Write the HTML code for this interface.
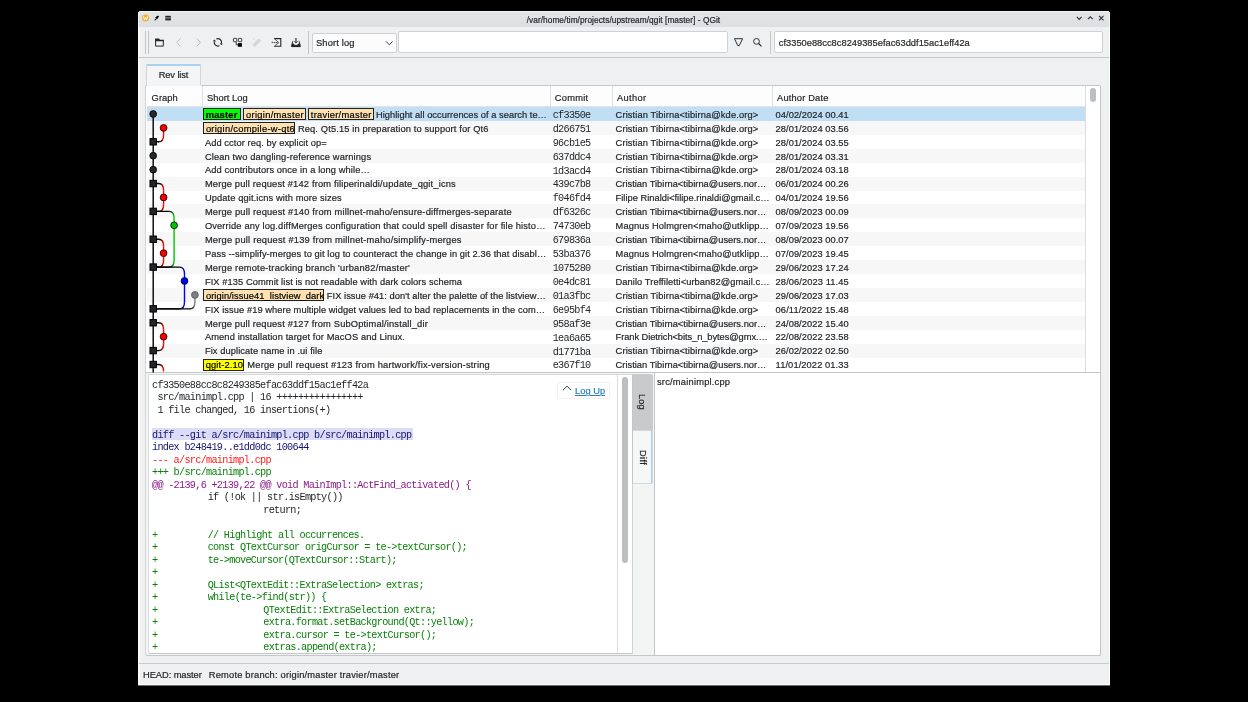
<!DOCTYPE html>
<html><head><meta charset="utf-8"><style>
html,body{margin:0;padding:0;background:#000;width:1248px;height:702px;overflow:hidden;position:relative}
.t{position:absolute;white-space:pre;font-family:"Liberation Sans",sans-serif;-webkit-text-stroke:0.2px currentColor}
.m{position:absolute;white-space:pre;font-family:"Liberation Mono",monospace}
</style></head><body>
<div style="position:absolute;left:138.00px;top:11.00px;width:971.70px;height:674.00px;background:#eff0f1;border-radius:4px 4px 0 0;box-shadow:inset 2px 0 0 #fafafb,inset -1px 0 0 #fafafb, inset 0 -1px 0 #fbfbfb, 0 1px 0 #6a6a6a"></div><div style="position:absolute;left:138.00px;top:11.00px;width:971.70px;height:16.00px;background:linear-gradient(#e3e4e6,#dddfe1);border-radius:4px 4px 0 0;box-shadow:inset 0 1px 0 #f2f3f4,inset 1px 0 0 #f2f3f4,inset -1px 0 0 #f2f3f4"></div><div style="position:absolute;left:139.00px;top:56.60px;width:969.70px;height:1.00px;background:#c6c8cb"></div><div style="position:absolute;left:145.00px;top:31.20px;width:0.90px;height:23.00px;background:#c4c6c8"></div><div style="position:absolute;left:147.90px;top:31.20px;width:0.90px;height:23.00px;background:#c4c6c8"></div><div style="position:absolute;left:308.20px;top:31.00px;width:0.90px;height:23.00px;background:#c4c6c8"></div><div style="position:absolute;left:770.10px;top:31.00px;width:0.90px;height:23.00px;background:#c4c6c8"></div><div style="position:absolute;left:312.20px;top:32.50px;width:84.60px;height:20.00px;background:#fcfcfc;border:1px solid #cfd1d3;border-radius:2px;box-sizing:border-box"></div><div style="position:absolute;left:397.80px;top:31.40px;width:330.60px;height:22.00px;background:#fff;border:1px solid #cfd1d3;border-radius:2px;box-sizing:border-box"></div><div style="position:absolute;left:773.60px;top:31.40px;width:329.20px;height:22.00px;background:#fff;border:1px solid #cfd1d3;border-radius:2px;box-sizing:border-box"></div><div style="position:absolute;left:145.90px;top:64.00px;width:55.20px;height:22.00px;background:#f4f5f6;border:1px solid #d3d5d7;border-bottom:none;border-radius:2px 2px 0 0;box-sizing:border-box"></div><div style="position:absolute;left:146.20px;top:64.00px;width:54.60px;height:1.80px;background:#a9d2f1;border-radius:2px 2px 0 0"></div><div style="position:absolute;left:145.40px;top:85.00px;width:955.90px;height:288.00px;background:#fff;border:1px solid #c4c6c8;border-left:1.8px solid #d2d4d6;box-sizing:border-box;border-radius:2px 2px 0 0"></div><div style="position:absolute;left:147.20px;top:86.00px;width:938.10px;height:20.50px;background:#fdfdfd"></div><div style="position:absolute;left:201.60px;top:86.00px;width:1.00px;height:20.50px;background:#dfe0e2"></div><div style="position:absolute;left:550.10px;top:86.00px;width:1.00px;height:20.50px;background:#dfe0e2"></div><div style="position:absolute;left:612.10px;top:86.00px;width:1.00px;height:20.50px;background:#dfe0e2"></div><div style="position:absolute;left:771.90px;top:86.00px;width:1.00px;height:20.50px;background:#dfe0e2"></div><div style="position:absolute;left:147.20px;top:106.00px;width:938.10px;height:1.00px;background:#e2e3e5"></div><div style="position:absolute;left:146.90px;top:84.60px;width:53.80px;height:1.60px;background:#f2f3f4"></div><div style="position:absolute;left:1085.30px;top:86.00px;width:1.00px;height:287.00px;background:#dcdddf"></div><div style="position:absolute;left:1090.00px;top:88.40px;width:6.00px;height:13.50px;background:#bcbec0;border-radius:3px"></div><div style="position:absolute;left:147.20px;top:107.00px;width:938.10px;height:13.92px;background:#c1dff4"></div><div style="position:absolute;left:202.80px;top:108.10px;width:38.60px;height:12.00px;background:#00ff00;border:1px solid #202020;box-sizing:border-box"></div><div style="position:absolute;left:243.20px;top:108.10px;width:62.50px;height:12.00px;background:#ffe2b2;border:1px solid #202020;box-sizing:border-box"></div><div style="position:absolute;left:307.90px;top:108.10px;width:66.00px;height:12.00px;background:#ffe2b2;border:1px solid #202020;box-sizing:border-box"></div><div style="position:absolute;left:147.20px;top:120.92px;width:938.10px;height:13.92px;background:#f7f7f7"></div><div style="position:absolute;left:203.00px;top:122.02px;width:91.80px;height:12.00px;background:#ffe2b2;border:1px solid #202020;box-sizing:border-box"></div><div style="position:absolute;left:147.20px;top:148.76px;width:938.10px;height:13.92px;background:#f7f7f7"></div><div style="position:absolute;left:147.20px;top:176.60px;width:938.10px;height:13.92px;background:#f7f7f7"></div><div style="position:absolute;left:147.20px;top:204.44px;width:938.10px;height:13.92px;background:#f7f7f7"></div><div style="position:absolute;left:147.20px;top:232.28px;width:938.10px;height:13.92px;background:#f7f7f7"></div><div style="position:absolute;left:147.20px;top:260.12px;width:938.10px;height:13.92px;background:#f7f7f7"></div><div style="position:absolute;left:147.20px;top:287.96px;width:938.10px;height:13.92px;background:#f7f7f7"></div><div style="position:absolute;left:203.00px;top:289.06px;width:121.00px;height:12.00px;background:#ffe2b2;border:1px solid #202020;box-sizing:border-box"></div><div style="position:absolute;left:147.20px;top:315.80px;width:938.10px;height:13.92px;background:#f7f7f7"></div><div style="position:absolute;left:147.20px;top:343.64px;width:938.10px;height:13.92px;background:#f7f7f7"></div><div style="position:absolute;left:202.80px;top:358.66px;width:41.30px;height:12.00px;background:#ffff00;border:1px solid #202020;box-sizing:border-box"></div><div style="position:absolute;left:145.20px;top:373.00px;width:956.10px;height:282.90px;background:#f3f4f4;border:1px solid #c4c6c8;border-left:1.8px solid #d3d5d7;border-top:none;box-sizing:border-box;border-radius:0 0 2.5px 2.5px"></div><div style="position:absolute;left:147.60px;top:373.60px;width:485.20px;height:280.20px;background:#fff;border:1px solid #c4c6c8;border-left:1.4px solid #dcdedf;border-top-color:#d6d8da;box-sizing:border-box;border-radius:0 0 2px 0"></div><div style="position:absolute;left:617.40px;top:374.20px;width:1.00px;height:278.80px;background:#dcdddf"></div><div style="position:absolute;left:622.00px;top:377.10px;width:5.60px;height:186.00px;background:#bcbec0;border-radius:3px"></div><div style="position:absolute;left:557.30px;top:382.30px;width:52.30px;height:16.40px;border:1px solid #f0f0f1;box-sizing:border-box;border-radius:2px"></div><div style="position:absolute;left:632.80px;top:374.00px;width:19.90px;height:55.60px;background:#c9cacc;border-radius:0 3px 0 0"></div><div style="position:absolute;left:632.80px;top:429.60px;width:19.90px;height:54.80px;background:#f6f7f7;border:1px solid #d6d8da;border-left:none;box-sizing:border-box;border-radius:0 0 2px 0"></div><div style="position:absolute;left:650.60px;top:430.20px;width:1.90px;height:53.80px;background:#a6d1f2"></div><div style="position:absolute;left:632.30px;top:484.40px;width:1.00px;height:169.40px;background:#d0d2d4"></div><div style="position:absolute;left:146.20px;top:372.00px;width:955.10px;height:1.00px;background:#c4c6c8"></div><div style="position:absolute;left:654.30px;top:373.00px;width:447.00px;height:282.90px;background:#fff;border:1px solid #c4c6c8;border-top:none;box-sizing:border-box;border-radius:0 0 2.5px 0"></div><div style="position:absolute;left:139.00px;top:662.80px;width:969.70px;height:1.00px;background:#c9cbcd"></div><div style="position:absolute;left:152.00px;top:428.20px;width:260.68px;height:11.60px;background:#dcdcf6"></div>
<svg style="position:absolute;left:0;top:0" width="1248" height="702"><circle cx="145.6" cy="18" r="3.6" fill="#f8b133"/><path d="M143.5 16.4 L144.5 19.9 L145.6 17.7 L146.7 19.9 L147.7 16.4" fill="none" stroke="#fff" stroke-width="0.9"/><path d="M154.6 20.4 L156.4 18.6" stroke="#232629" stroke-width="1.1"/><path d="M155.2 17.6 L157.9 15.4 L159.1 16.6 L157 19.3 Z" fill="#000"/><rect x="165.3" y="15.8" width="5.6" height="4.6" fill="#232629"/><rect x="165.3" y="17.6" width="5.6" height="0.7" fill="#dee0e2"/><path d="M1076.8 16.9 L1079.2 19.3 L1081.6 16.9" fill="none" stroke="#31363b" stroke-width="1.2"/><path d="M1087.9 19.2 L1090.3 16.8 L1092.7 19.2" fill="none" stroke="#31363b" stroke-width="1.2"/><path d="M1099 15.8 L1103.5 20.3 M1103.5 15.8 L1099 20.3" fill="none" stroke="#31363b" stroke-width="1.2"/><path d="M155.6 40.5 V46.1 H163.3 V40.5 Z" fill="none" stroke="#232629" stroke-width="1"/><path d="M155.1 38.6 H159 L160 39.8 H163.8 V41.3 H155.1 Z" fill="#232629"/><path d="M180.6 38.4 L176.8 42.4 L180.6 46.4" fill="none" stroke="#b4b6b8" stroke-width="0.9"/><path d="M196.6 38.4 L200.4 42.4 L196.6 46.4" fill="none" stroke="#b4b6b8" stroke-width="0.9"/><path d="M216.34 39.00 A3.7 3.7 0 0 1 221.47 43.31 M219.46 45.70 A3.7 3.7 0 0 1 214.33 41.39" fill="none" stroke="#232629" stroke-width="1.1"/><path d="M220.96 45.24 L222.92 43.70 L220.03 42.92Z M214.84 39.46 L212.88 41.00 L215.77 41.78Z" fill="#232629"/><rect x="233.4" y="38.4" width="3.4" height="3.3" rx="0.4" fill="none" stroke="#232629" stroke-width="0.85"/><rect x="238.3" y="38.4" width="3.4" height="3.3" rx="0.4" fill="none" stroke="#232629" stroke-width="0.85"/><path d="M236.2 42 V44.8 H238" fill="none" stroke="#232629" stroke-width="0.9"/><rect x="237.9" y="43.1" width="4" height="3.7" fill="#000"/><path d="M253.2 44.6 L258.9 38.9 L260.6 40.6 L254.9 46.3 Z" fill="none" stroke="#c6c7c9" stroke-width="0.9"/><path d="M254 45.5 L259.8 39.7" stroke="#d0d1d3" stroke-width="1.2"/><circle cx="253.7" cy="39" r="0.5" fill="#c8c9cb"/><path d="M274.2 38.6 H280.8 V46.3 H274.2" fill="none" stroke="#232629" stroke-width="1.1"/><path d="M274.6 38.9 L278.8 42.5 L274.6 46.1" fill="none" stroke="#232629" stroke-width="0.7"/><path d="M271.6 42.3 H273 M273.6 42.6 H275 M275.6 42.6 H277.6" stroke="#232629" stroke-width="0.9"/><path d="M292.9 40.9 L291.7 46.6 H300.2 L299 40.9" fill="#fff" stroke="#232629" stroke-width="0.9"/><path d="M291.7 43.5 H293.6 A2.35 1.5 0 0 0 298.3 43.5 H300.2 L300.6 46.9 H291.3Z" fill="#232629"/><path d="M295.95 37.9 V43" stroke="#232629" stroke-width="1.1"/><path d="M294.3 41.4 L295.95 43.2 L297.6 41.4" fill="none" stroke="#232629" stroke-width="0.9"/><path d="M386 41.4 L389.3 44.7 L392.6 41.4" fill="none" stroke="#232629" stroke-width="0.9"/><path d="M734.5 38.7 L742.6 38.7 L739.2 45.7 L737.8 45.7 Z" fill="none" stroke="#232629" stroke-width="0.95" stroke-linejoin="round"/><circle cx="756.5" cy="41.4" r="2.9" fill="none" stroke="#232629" stroke-width="0.95"/><path d="M758.6 43.5 L761.5 46.4" stroke="#232629" stroke-width="1.1"/><path d="M562.9 390.2 L567 386.1 L571.1 390.2" fill="none" stroke="#232629" stroke-width="0.9"/><defs><clipPath id="gc"><rect x="147" y="107" width="55" height="265.4"/></clipPath></defs><g clip-path="url(#gc)"><line x1="153.2" y1="113.96" x2="153.2" y2="373" stroke="#000" stroke-width="1.4"/><line x1="163.6" y1="127.88" x2="163.6" y2="134.84" stroke="#ff0000" stroke-width="1.4"/><linearGradient id="g1" gradientUnits="userSpaceOnUse" x1="158.80" y1="141.80" x2="163.60" y2="137.30"><stop offset="0" stop-color="#111"/><stop offset="1" stop-color="#ff0000"/></linearGradient><path d="M163.60 134.80 Q163.60 141.80 158.80 141.80" fill="none" stroke="url(#g1)" stroke-width="1.4"/><path d="M159.00 141.80 H156.2" fill="none" stroke="#000" stroke-width="1.4"/><path d="M156.2 183.56 H159.00" fill="none" stroke="#000" stroke-width="1.4"/><linearGradient id="g2" gradientUnits="userSpaceOnUse" x1="158.80" y1="183.56" x2="163.60" y2="188.06"><stop offset="0" stop-color="#111"/><stop offset="1" stop-color="#ff0000"/></linearGradient><path d="M158.80 183.56 Q163.60 183.56 163.60 190.56" fill="none" stroke="url(#g2)" stroke-width="1.4"/><line x1="163.6" y1="190.52" x2="163.6" y2="204.44" stroke="#ff0000" stroke-width="1.4"/><linearGradient id="g3" gradientUnits="userSpaceOnUse" x1="158.80" y1="211.40" x2="163.60" y2="206.90"><stop offset="0" stop-color="#111"/><stop offset="1" stop-color="#ff0000"/></linearGradient><path d="M163.60 204.40 Q163.60 211.40 158.80 211.40" fill="none" stroke="url(#g3)" stroke-width="1.4"/><path d="M159.00 211.40 H156.2" fill="none" stroke="#000" stroke-width="1.4"/><path d="M156.2 211.40 H169.50" fill="none" stroke="#000" stroke-width="1.4"/><linearGradient id="g4" gradientUnits="userSpaceOnUse" x1="169.30" y1="211.40" x2="174.10" y2="215.90"><stop offset="0" stop-color="#111"/><stop offset="1" stop-color="#00c800"/></linearGradient><path d="M169.30 211.40 Q174.10 211.40 174.10 218.40" fill="none" stroke="url(#g4)" stroke-width="1.4"/><line x1="174.1" y1="218.36" x2="174.1" y2="260.12" stroke="#00c800" stroke-width="1.4"/><linearGradient id="g5" gradientUnits="userSpaceOnUse" x1="169.30" y1="267.08" x2="174.10" y2="262.58"><stop offset="0" stop-color="#111"/><stop offset="1" stop-color="#00c800"/></linearGradient><path d="M174.10 260.08 Q174.10 267.08 169.30 267.08" fill="none" stroke="url(#g5)" stroke-width="1.4"/><path d="M169.50 267.08 H156.2" fill="none" stroke="#000" stroke-width="1.4"/><path d="M156.2 239.24 H159.00" fill="none" stroke="#000" stroke-width="1.4"/><linearGradient id="g6" gradientUnits="userSpaceOnUse" x1="158.80" y1="239.24" x2="163.60" y2="243.74"><stop offset="0" stop-color="#111"/><stop offset="1" stop-color="#ff0000"/></linearGradient><path d="M158.80 239.24 Q163.60 239.24 163.60 246.24" fill="none" stroke="url(#g6)" stroke-width="1.4"/><line x1="163.6" y1="246.20" x2="163.6" y2="260.12" stroke="#ff0000" stroke-width="1.4"/><linearGradient id="g7" gradientUnits="userSpaceOnUse" x1="158.80" y1="267.08" x2="163.60" y2="262.58"><stop offset="0" stop-color="#111"/><stop offset="1" stop-color="#ff0000"/></linearGradient><path d="M163.60 260.08 Q163.60 267.08 158.80 267.08" fill="none" stroke="url(#g7)" stroke-width="1.4"/><path d="M159.00 267.08 H156.2" fill="none" stroke="#000" stroke-width="1.4"/><path d="M156.2 267.08 H179.90" fill="none" stroke="#000" stroke-width="1.4"/><linearGradient id="g8" gradientUnits="userSpaceOnUse" x1="179.70" y1="267.08" x2="184.50" y2="271.58"><stop offset="0" stop-color="#111"/><stop offset="1" stop-color="#0000ff"/></linearGradient><path d="M179.70 267.08 Q184.50 267.08 184.50 274.08" fill="none" stroke="url(#g8)" stroke-width="1.4"/><line x1="184.5" y1="274.04" x2="184.5" y2="301.88" stroke="#0000ff" stroke-width="1.4"/><linearGradient id="g9" gradientUnits="userSpaceOnUse" x1="179.70" y1="308.84" x2="184.50" y2="304.34"><stop offset="0" stop-color="#111"/><stop offset="1" stop-color="#0000ff"/></linearGradient><path d="M184.50 301.84 Q184.50 308.84 179.70 308.84" fill="none" stroke="url(#g9)" stroke-width="1.4"/><path d="M179.90 308.84 H156.2" fill="none" stroke="#000" stroke-width="1.4"/><line x1="194.9" y1="294.92" x2="194.9" y2="301.88" stroke="#808080" stroke-width="1.4"/><linearGradient id="g10" gradientUnits="userSpaceOnUse" x1="190.10" y1="308.84" x2="194.90" y2="304.34"><stop offset="0" stop-color="#111"/><stop offset="1" stop-color="#808080"/></linearGradient><path d="M194.90 301.84 Q194.90 308.84 190.10 308.84" fill="none" stroke="url(#g10)" stroke-width="1.4"/><path d="M190.30 308.84 H156.2" fill="none" stroke="#000" stroke-width="1.4"/><path d="M156.2 322.76 H159.00" fill="none" stroke="#000" stroke-width="1.4"/><linearGradient id="g11" gradientUnits="userSpaceOnUse" x1="158.80" y1="322.76" x2="163.60" y2="327.26"><stop offset="0" stop-color="#111"/><stop offset="1" stop-color="#ff0000"/></linearGradient><path d="M158.80 322.76 Q163.60 322.76 163.60 329.76" fill="none" stroke="url(#g11)" stroke-width="1.4"/><line x1="163.6" y1="329.72" x2="163.6" y2="343.64" stroke="#ff0000" stroke-width="1.4"/><linearGradient id="g12" gradientUnits="userSpaceOnUse" x1="158.80" y1="350.60" x2="163.60" y2="346.10"><stop offset="0" stop-color="#111"/><stop offset="1" stop-color="#ff0000"/></linearGradient><path d="M163.60 343.60 Q163.60 350.60 158.80 350.60" fill="none" stroke="url(#g12)" stroke-width="1.4"/><path d="M159.00 350.60 H156.2" fill="none" stroke="#000" stroke-width="1.4"/><path d="M156.2 364.52 H159.00" fill="none" stroke="#000" stroke-width="1.4"/><linearGradient id="g13" gradientUnits="userSpaceOnUse" x1="158.80" y1="364.52" x2="163.60" y2="369.02"><stop offset="0" stop-color="#111"/><stop offset="1" stop-color="#ff0000"/></linearGradient><path d="M158.80 364.52 Q163.60 364.52 163.60 371.52" fill="none" stroke="url(#g13)" stroke-width="1.4"/><circle cx="153.2" cy="113.96" r="3.4" fill="#25282b" stroke="#000" stroke-width="0.8"/><circle cx="163.6" cy="127.88" r="3.4" fill="#ff0000" stroke="#000" stroke-width="0.8"/><rect x="150.0" y="138.60" width="6.4" height="6.4" fill="#232629" stroke="#000" stroke-width="1"/><circle cx="153.2" cy="155.72" r="3.4" fill="#25282b" stroke="#000" stroke-width="0.8"/><circle cx="153.2" cy="169.64" r="3.4" fill="#25282b" stroke="#000" stroke-width="0.8"/><rect x="150.0" y="180.36" width="6.4" height="6.4" fill="#232629" stroke="#000" stroke-width="1"/><circle cx="163.6" cy="197.48" r="3.4" fill="#ff0000" stroke="#000" stroke-width="0.8"/><rect x="150.0" y="208.20" width="6.4" height="6.4" fill="#232629" stroke="#000" stroke-width="1"/><circle cx="174.1" cy="225.32" r="3.4" fill="#00c800" stroke="#000" stroke-width="0.8"/><rect x="150.0" y="236.04" width="6.4" height="6.4" fill="#232629" stroke="#000" stroke-width="1"/><circle cx="163.6" cy="253.16" r="3.4" fill="#ff0000" stroke="#000" stroke-width="0.8"/><rect x="150.0" y="263.88" width="6.4" height="6.4" fill="#232629" stroke="#000" stroke-width="1"/><circle cx="184.5" cy="281.00" r="3.4" fill="#0000ff" stroke="#000" stroke-width="0.8"/><circle cx="194.9" cy="294.92" r="3.4" fill="#808080" stroke="#555" stroke-width="0.8"/><rect x="150.0" y="305.64" width="6.4" height="6.4" fill="#232629" stroke="#000" stroke-width="1"/><rect x="150.0" y="319.56" width="6.4" height="6.4" fill="#232629" stroke="#000" stroke-width="1"/><circle cx="163.6" cy="336.68" r="3.4" fill="#ff0000" stroke="#000" stroke-width="0.8"/><rect x="150.0" y="347.40" width="6.4" height="6.4" fill="#232629" stroke="#000" stroke-width="1"/><rect x="150.0" y="361.32" width="6.4" height="6.4" fill="#232629" stroke="#000" stroke-width="1"/></g></svg>
<div style="position:absolute;left:0;top:0;width:1248px;height:702px;will-change:transform"><div class="t" style="left:526.70px;top:15.99px;font-size:8.30px;line-height:9.27px;letter-spacing:0.050px;color:#232629;font-weight:normal;">/var/home/tim/projects/upstream/qgit [master] - QGit</div><div class="t" style="left:316.00px;top:38.47px;font-size:9.31px;line-height:10.41px;letter-spacing:0.149px;color:#232629;font-weight:normal;">Short log</div><div class="t" style="left:778.80px;top:37.67px;font-size:9.31px;line-height:10.41px;letter-spacing:0.009px;color:#232629;font-weight:normal;">cf3350e88cc8c8249385efac63ddf15ac1eff42a</div><div class="t" style="left:158.70px;top:70.47px;font-size:9.31px;line-height:10.41px;letter-spacing:-0.107px;color:#232629;font-weight:normal;">Rev list</div><div class="t" style="left:151.60px;top:92.57px;font-size:9.31px;line-height:10.41px;letter-spacing:0.081px;color:#232629;font-weight:normal;">Graph</div><div class="t" style="left:206.90px;top:92.57px;font-size:9.31px;line-height:10.41px;letter-spacing:0.069px;color:#232629;font-weight:normal;">Short Log</div><div class="t" style="left:554.80px;top:92.57px;font-size:9.31px;line-height:10.41px;letter-spacing:0.253px;color:#232629;font-weight:normal;">Commit</div><div class="t" style="left:617.10px;top:92.57px;font-size:9.31px;line-height:10.41px;letter-spacing:0.315px;color:#232629;font-weight:normal;">Author</div><div class="t" style="left:777.00px;top:92.57px;font-size:9.31px;line-height:10.41px;letter-spacing:0.178px;color:#232629;font-weight:normal;">Author Date</div><div class="t" style="left:615.60px;top:109.77px;font-size:9.31px;line-height:10.41px;letter-spacing:0.122px;color:#232629;font-weight:normal;">Cristian Tibirna&lt;tibirna@kde.org&gt;</div><div class="t" style="left:775.60px;top:109.77px;font-size:9.31px;line-height:10.41px;letter-spacing:0.053px;color:#232629;font-weight:normal;">04/02/2024 00.41</div><div class="t" style="left:205.70px;top:109.77px;font-size:9.31px;line-height:10.41px;letter-spacing:0.217px;color:#000;font-weight:bold;">master</div><div class="t" style="left:246.10px;top:109.77px;font-size:9.31px;line-height:10.41px;letter-spacing:0.305px;color:#000;font-weight:normal;">origin/master</div><div class="t" style="left:310.80px;top:109.77px;font-size:9.31px;line-height:10.41px;letter-spacing:0.284px;color:#000;font-weight:normal;">travier/master</div><div class="t" style="left:376.00px;top:109.77px;font-size:9.31px;line-height:10.41px;letter-spacing:0.035px;color:#232629;font-weight:normal;">Highlight all occurrences of a search te…</div><div class="t" style="left:615.60px;top:123.69px;font-size:9.31px;line-height:10.41px;letter-spacing:0.122px;color:#232629;font-weight:normal;">Cristian Tibirna&lt;tibirna@kde.org&gt;</div><div class="t" style="left:775.60px;top:123.69px;font-size:9.31px;line-height:10.41px;letter-spacing:0.053px;color:#232629;font-weight:normal;">28/01/2024 03.56</div><div class="t" style="left:205.90px;top:123.69px;font-size:9.31px;line-height:10.41px;letter-spacing:0.296px;color:#000;font-weight:normal;">origin/compile-w-qt6</div><div class="t" style="left:297.90px;top:123.69px;font-size:9.31px;line-height:10.41px;letter-spacing:0.137px;color:#232629;font-weight:normal;">Req. Qt5.15 in preparation to support for Qt6</div><div class="t" style="left:615.60px;top:137.61px;font-size:9.31px;line-height:10.41px;letter-spacing:0.122px;color:#232629;font-weight:normal;">Cristian Tibirna&lt;tibirna@kde.org&gt;</div><div class="t" style="left:775.60px;top:137.61px;font-size:9.31px;line-height:10.41px;letter-spacing:0.053px;color:#232629;font-weight:normal;">28/01/2024 03.55</div><div class="t" style="left:204.90px;top:137.61px;font-size:9.31px;line-height:10.41px;letter-spacing:0.077px;color:#232629;font-weight:normal;">Add cctor req. by explicit op=</div><div class="t" style="left:615.60px;top:151.53px;font-size:9.31px;line-height:10.41px;letter-spacing:0.122px;color:#232629;font-weight:normal;">Cristian Tibirna&lt;tibirna@kde.org&gt;</div><div class="t" style="left:775.60px;top:151.53px;font-size:9.31px;line-height:10.41px;letter-spacing:0.053px;color:#232629;font-weight:normal;">28/01/2024 03.31</div><div class="t" style="left:204.90px;top:151.53px;font-size:9.31px;line-height:10.41px;letter-spacing:0.136px;color:#232629;font-weight:normal;">Clean two dangling-reference warnings</div><div class="t" style="left:615.60px;top:165.45px;font-size:9.31px;line-height:10.41px;letter-spacing:0.122px;color:#232629;font-weight:normal;">Cristian Tibirna&lt;tibirna@kde.org&gt;</div><div class="t" style="left:775.60px;top:165.45px;font-size:9.31px;line-height:10.41px;letter-spacing:0.053px;color:#232629;font-weight:normal;">28/01/2024 03.18</div><div class="t" style="left:204.90px;top:165.45px;font-size:9.31px;line-height:10.41px;letter-spacing:0.098px;color:#232629;font-weight:normal;">Add contributors once in a long while…</div><div class="t" style="left:615.60px;top:179.37px;font-size:9.31px;line-height:10.41px;letter-spacing:0.017px;color:#232629;font-weight:normal;">Cristian Tibirna&lt;tibirna@users.nor…</div><div class="t" style="left:775.60px;top:179.37px;font-size:9.31px;line-height:10.41px;letter-spacing:0.053px;color:#232629;font-weight:normal;">06/01/2024 00.26</div><div class="t" style="left:204.90px;top:179.37px;font-size:9.31px;line-height:10.41px;letter-spacing:0.173px;color:#232629;font-weight:normal;">Merge pull request #142 from filiperinaldi/update_qgit_icns</div><div class="t" style="left:615.60px;top:193.29px;font-size:9.31px;line-height:10.41px;letter-spacing:0.016px;color:#232629;font-weight:normal;">Filipe Rinaldi&lt;filipe.rinaldi@gmail.c…</div><div class="t" style="left:775.60px;top:193.29px;font-size:9.31px;line-height:10.41px;letter-spacing:0.053px;color:#232629;font-weight:normal;">04/01/2024 19.56</div><div class="t" style="left:204.90px;top:193.29px;font-size:9.31px;line-height:10.41px;letter-spacing:0.112px;color:#232629;font-weight:normal;">Update qgit.icns with more sizes</div><div class="t" style="left:615.60px;top:207.21px;font-size:9.31px;line-height:10.41px;letter-spacing:0.017px;color:#232629;font-weight:normal;">Cristian Tibirna&lt;tibirna@users.nor…</div><div class="t" style="left:775.60px;top:207.21px;font-size:9.31px;line-height:10.41px;letter-spacing:0.053px;color:#232629;font-weight:normal;">08/09/2023 00.09</div><div class="t" style="left:204.90px;top:207.21px;font-size:9.31px;line-height:10.41px;letter-spacing:0.192px;color:#232629;font-weight:normal;">Merge pull request #140 from millnet-maho/ensure-diffmerges-separate</div><div class="t" style="left:615.60px;top:221.13px;font-size:9.31px;line-height:10.41px;letter-spacing:0.103px;color:#232629;font-weight:normal;">Magnus Holmgren&lt;maho@utklipp…</div><div class="t" style="left:775.60px;top:221.13px;font-size:9.31px;line-height:10.41px;letter-spacing:0.053px;color:#232629;font-weight:normal;">07/09/2023 19.56</div><div class="t" style="left:204.90px;top:221.13px;font-size:9.31px;line-height:10.41px;letter-spacing:0.141px;color:#232629;font-weight:normal;">Override any log.diffMerges configuration that could spell disaster for file histo…</div><div class="t" style="left:615.60px;top:235.05px;font-size:9.31px;line-height:10.41px;letter-spacing:0.017px;color:#232629;font-weight:normal;">Cristian Tibirna&lt;tibirna@users.nor…</div><div class="t" style="left:775.60px;top:235.05px;font-size:9.31px;line-height:10.41px;letter-spacing:0.053px;color:#232629;font-weight:normal;">08/09/2023 00.07</div><div class="t" style="left:204.90px;top:235.05px;font-size:9.31px;line-height:10.41px;letter-spacing:0.209px;color:#232629;font-weight:normal;">Merge pull request #139 from millnet-maho/simplify-merges</div><div class="t" style="left:615.60px;top:248.97px;font-size:9.31px;line-height:10.41px;letter-spacing:0.103px;color:#232629;font-weight:normal;">Magnus Holmgren&lt;maho@utklipp…</div><div class="t" style="left:775.60px;top:248.97px;font-size:9.31px;line-height:10.41px;letter-spacing:0.053px;color:#232629;font-weight:normal;">07/09/2023 19.45</div><div class="t" style="left:204.90px;top:248.97px;font-size:9.31px;line-height:10.41px;letter-spacing:0.086px;color:#232629;font-weight:normal;">Pass --simplify-merges to git log to counteract the change in git 2.36 that disabl…</div><div class="t" style="left:615.60px;top:262.89px;font-size:9.31px;line-height:10.41px;letter-spacing:0.122px;color:#232629;font-weight:normal;">Cristian Tibirna&lt;tibirna@kde.org&gt;</div><div class="t" style="left:775.60px;top:262.89px;font-size:9.31px;line-height:10.41px;letter-spacing:0.053px;color:#232629;font-weight:normal;">29/06/2023 17.24</div><div class="t" style="left:204.90px;top:262.89px;font-size:9.31px;line-height:10.41px;letter-spacing:0.209px;color:#232629;font-weight:normal;">Merge remote-tracking branch 'urban82/master'</div><div class="t" style="left:615.60px;top:276.81px;font-size:9.31px;line-height:10.41px;letter-spacing:0.067px;color:#232629;font-weight:normal;">Danilo Treffiletti&lt;urban82@gmail.c…</div><div class="t" style="left:775.60px;top:276.81px;font-size:9.31px;line-height:10.41px;letter-spacing:0.097px;color:#232629;font-weight:normal;">28/06/2023 11.45</div><div class="t" style="left:204.90px;top:276.81px;font-size:9.31px;line-height:10.41px;letter-spacing:0.082px;color:#232629;font-weight:normal;">FIX #135 Commit list is not readable with dark colors schema</div><div class="t" style="left:615.60px;top:290.73px;font-size:9.31px;line-height:10.41px;letter-spacing:0.122px;color:#232629;font-weight:normal;">Cristian Tibirna&lt;tibirna@kde.org&gt;</div><div class="t" style="left:775.60px;top:290.73px;font-size:9.31px;line-height:10.41px;letter-spacing:0.053px;color:#232629;font-weight:normal;">29/06/2023 17.03</div><div class="t" style="left:205.90px;top:290.73px;font-size:9.31px;line-height:10.41px;letter-spacing:0.094px;color:#000;font-weight:normal;">origin/issue41_listview_dark</div><div class="t" style="left:326.80px;top:290.73px;font-size:9.31px;line-height:10.41px;letter-spacing:0.050px;color:#232629;font-weight:normal;">FIX issue #41: don't alter the palette of the listview…</div><div class="t" style="left:615.60px;top:304.65px;font-size:9.31px;line-height:10.41px;letter-spacing:0.122px;color:#232629;font-weight:normal;">Cristian Tibirna&lt;tibirna@kde.org&gt;</div><div class="t" style="left:775.60px;top:304.65px;font-size:9.31px;line-height:10.41px;letter-spacing:0.097px;color:#232629;font-weight:normal;">06/11/2022 15.48</div><div class="t" style="left:204.90px;top:304.65px;font-size:9.31px;line-height:10.41px;letter-spacing:0.069px;color:#232629;font-weight:normal;">FIX issue #19 where multiple widget values led to bad replacements in the com…</div><div class="t" style="left:615.60px;top:318.57px;font-size:9.31px;line-height:10.41px;letter-spacing:0.017px;color:#232629;font-weight:normal;">Cristian Tibirna&lt;tibirna@users.nor…</div><div class="t" style="left:775.60px;top:318.57px;font-size:9.31px;line-height:10.41px;letter-spacing:0.053px;color:#232629;font-weight:normal;">24/08/2022 15.40</div><div class="t" style="left:204.90px;top:318.57px;font-size:9.31px;line-height:10.41px;letter-spacing:0.168px;color:#232629;font-weight:normal;">Merge pull request #127 from SubOptimal/install_dir</div><div class="t" style="left:615.60px;top:332.49px;font-size:9.31px;line-height:10.41px;letter-spacing:-0.068px;color:#232629;font-weight:normal;">Frank Dietrich&lt;bits_n_bytes@gmx.…</div><div class="t" style="left:775.60px;top:332.49px;font-size:9.31px;line-height:10.41px;letter-spacing:0.053px;color:#232629;font-weight:normal;">22/08/2022 23.58</div><div class="t" style="left:204.90px;top:332.49px;font-size:9.31px;line-height:10.41px;letter-spacing:0.116px;color:#232629;font-weight:normal;">Amend installation target for MacOS and Linux.</div><div class="t" style="left:615.60px;top:346.41px;font-size:9.31px;line-height:10.41px;letter-spacing:0.122px;color:#232629;font-weight:normal;">Cristian Tibirna&lt;tibirna@kde.org&gt;</div><div class="t" style="left:775.60px;top:346.41px;font-size:9.31px;line-height:10.41px;letter-spacing:0.053px;color:#232629;font-weight:normal;">26/02/2022 02.50</div><div class="t" style="left:204.90px;top:346.41px;font-size:9.31px;line-height:10.41px;letter-spacing:0.094px;color:#232629;font-weight:normal;">Fix duplicate name in .ui file</div><div class="t" style="left:615.60px;top:360.33px;font-size:9.31px;line-height:10.41px;letter-spacing:0.017px;color:#232629;font-weight:normal;">Cristian Tibirna&lt;tibirna@users.nor…</div><div class="t" style="left:775.60px;top:360.33px;font-size:9.31px;line-height:10.41px;letter-spacing:0.097px;color:#232629;font-weight:normal;">11/01/2022 01.33</div><div class="t" style="left:205.70px;top:360.33px;font-size:9.31px;line-height:10.41px;letter-spacing:0.124px;color:#000;font-weight:normal;">qgit-2.10</div><div class="t" style="left:247.30px;top:360.33px;font-size:9.31px;line-height:10.41px;letter-spacing:0.218px;color:#232629;font-weight:normal;">Merge pull request #123 from hartwork/fix-version-string</div><div class="t" style="left:575.00px;top:386.07px;font-size:9.31px;line-height:10.41px;letter-spacing:0.029px;color:#2980b9;font-weight:normal;text-decoration:underline;text-underline-offset:1px;">Log Up</div><div class="t" style="left:647.33px;top:393.60px;font-size:9.31px;line-height:10.41px;letter-spacing:0.062px;color:#232629;transform:rotate(90deg);transform-origin:0 0">Log</div><div class="t" style="left:648.23px;top:450.30px;font-size:9.31px;line-height:10.41px;letter-spacing:0.328px;color:#232629;transform:rotate(90deg);transform-origin:0 0">Diff</div><div class="t" style="left:657.00px;top:376.67px;font-size:9.31px;line-height:10.41px;letter-spacing:0.220px;color:#232629;font-weight:normal;">src/mainimpl.cpp</div><div class="t" style="left:143.10px;top:669.87px;font-size:9.31px;line-height:10.41px;letter-spacing:-0.070px;color:#232629;font-weight:normal;">HEAD: master</div><div class="t" style="left:208.80px;top:669.87px;font-size:9.31px;line-height:10.41px;letter-spacing:0.203px;color:#232629;font-weight:normal;">Remote branch: origin/master travier/master</div><div class="m" style="left:552.70px;top:109.86px;font-size:10.20px;line-height:11.55px;letter-spacing:-0.710px;color:#232629;">cf3350e</div><div class="m" style="left:552.70px;top:123.78px;font-size:10.20px;line-height:11.55px;letter-spacing:-0.710px;color:#232629;">d266751</div><div class="m" style="left:552.70px;top:137.70px;font-size:10.20px;line-height:11.55px;letter-spacing:-0.710px;color:#232629;">96cb1e5</div><div class="m" style="left:552.70px;top:151.62px;font-size:10.20px;line-height:11.55px;letter-spacing:-0.710px;color:#232629;">637ddc4</div><div class="m" style="left:552.70px;top:165.54px;font-size:10.20px;line-height:11.55px;letter-spacing:-0.710px;color:#232629;">1d3acd4</div><div class="m" style="left:552.70px;top:179.46px;font-size:10.20px;line-height:11.55px;letter-spacing:-0.710px;color:#232629;">439c7b8</div><div class="m" style="left:552.70px;top:193.38px;font-size:10.20px;line-height:11.55px;letter-spacing:-0.710px;color:#232629;">f046fd4</div><div class="m" style="left:552.70px;top:207.30px;font-size:10.20px;line-height:11.55px;letter-spacing:-0.710px;color:#232629;">df6326c</div><div class="m" style="left:552.70px;top:221.22px;font-size:10.20px;line-height:11.55px;letter-spacing:-0.710px;color:#232629;">74730eb</div><div class="m" style="left:552.70px;top:235.14px;font-size:10.20px;line-height:11.55px;letter-spacing:-0.710px;color:#232629;">679836a</div><div class="m" style="left:552.70px;top:249.06px;font-size:10.20px;line-height:11.55px;letter-spacing:-0.710px;color:#232629;">53ba376</div><div class="m" style="left:552.70px;top:262.98px;font-size:10.20px;line-height:11.55px;letter-spacing:-0.710px;color:#232629;">1075280</div><div class="m" style="left:552.70px;top:276.90px;font-size:10.20px;line-height:11.55px;letter-spacing:-0.710px;color:#232629;">0e4dc81</div><div class="m" style="left:552.70px;top:290.82px;font-size:10.20px;line-height:11.55px;letter-spacing:-0.710px;color:#232629;">01a3fbc</div><div class="m" style="left:552.70px;top:304.74px;font-size:10.20px;line-height:11.55px;letter-spacing:-0.710px;color:#232629;">6e95bf4</div><div class="m" style="left:552.70px;top:318.66px;font-size:10.20px;line-height:11.55px;letter-spacing:-0.710px;color:#232629;">958af3e</div><div class="m" style="left:552.70px;top:332.58px;font-size:10.20px;line-height:11.55px;letter-spacing:-0.710px;color:#232629;">1ea6a65</div><div class="m" style="left:552.70px;top:346.50px;font-size:10.20px;line-height:11.55px;letter-spacing:-0.710px;color:#232629;">d1771ba</div><div class="m" style="left:552.70px;top:360.42px;font-size:10.20px;line-height:11.55px;letter-spacing:-0.710px;color:#232629;">e367f10</div><div class="m" style="left:152.00px;top:379.96px;font-size:10.20px;line-height:11.55px;letter-spacing:-0.710px;color:#232629;">cf3350e88cc8c8249385efac63ddf15ac1eff42a</div><div class="m" style="left:152.00px;top:392.46px;font-size:10.20px;line-height:11.55px;letter-spacing:-0.710px;color:#232629;"> src/mainimpl.cpp | 16 ++++++++++++++++</div><div class="m" style="left:152.00px;top:404.96px;font-size:10.20px;line-height:11.55px;letter-spacing:-0.710px;color:#232629;"> 1 file changed, 16 insertions(+)</div><div class="m" style="left:152.00px;top:429.96px;font-size:10.20px;line-height:11.55px;letter-spacing:-0.710px;color:#141470;">diff --git a/src/mainimpl.cpp b/src/mainimpl.cpp</div><div class="m" style="left:152.00px;top:442.46px;font-size:10.20px;line-height:11.55px;letter-spacing:-0.710px;color:#141470;">index b248419..e1dd0dc 100644</div><div class="m" style="left:152.00px;top:454.96px;font-size:10.20px;line-height:11.55px;letter-spacing:-0.710px;color:#ff1a1a;">--- a/src/mainimpl.cpp</div><div class="m" style="left:152.00px;top:467.46px;font-size:10.20px;line-height:11.55px;letter-spacing:-0.710px;color:#0a800a;">+++ b/src/mainimpl.cpp</div><div class="m" style="left:152.00px;top:479.96px;font-size:10.20px;line-height:11.55px;letter-spacing:-0.710px;color:#8a1a8a;">@@ -2139,6 +2139,22 @@ void MainImpl::ActFind_activated() {</div><div class="m" style="left:152.00px;top:492.46px;font-size:10.20px;line-height:11.55px;letter-spacing:-0.710px;color:#232629;"> </div><div class="m" style="left:207.65px;top:492.46px;font-size:10.20px;line-height:11.55px;letter-spacing:-0.710px;color:#232629;">if (!ok || str.isEmpty())</div><div class="m" style="left:152.00px;top:504.96px;font-size:10.20px;line-height:11.55px;letter-spacing:-0.710px;color:#232629;"> </div><div class="m" style="left:263.30px;top:504.96px;font-size:10.20px;line-height:11.55px;letter-spacing:-0.710px;color:#232629;">return;</div><div class="m" style="left:152.00px;top:529.96px;font-size:10.20px;line-height:11.55px;letter-spacing:-0.710px;color:#0a800a;">+</div><div class="m" style="left:207.65px;top:529.96px;font-size:10.20px;line-height:11.55px;letter-spacing:-0.710px;color:#0a800a;">// Highlight all occurrences.</div><div class="m" style="left:152.00px;top:542.46px;font-size:10.20px;line-height:11.55px;letter-spacing:-0.710px;color:#0a800a;">+</div><div class="m" style="left:207.65px;top:542.46px;font-size:10.20px;line-height:11.55px;letter-spacing:-0.710px;color:#0a800a;">const QTextCursor origCursor = te-&gt;textCursor();</div><div class="m" style="left:152.00px;top:554.96px;font-size:10.20px;line-height:11.55px;letter-spacing:-0.710px;color:#0a800a;">+</div><div class="m" style="left:207.65px;top:554.96px;font-size:10.20px;line-height:11.55px;letter-spacing:-0.710px;color:#0a800a;">te-&gt;moveCursor(QTextCursor::Start);</div><div class="m" style="left:152.00px;top:567.46px;font-size:10.20px;line-height:11.55px;letter-spacing:-0.710px;color:#0a800a;">+</div><div class="m" style="left:152.00px;top:579.96px;font-size:10.20px;line-height:11.55px;letter-spacing:-0.710px;color:#0a800a;">+</div><div class="m" style="left:207.65px;top:579.96px;font-size:10.20px;line-height:11.55px;letter-spacing:-0.710px;color:#0a800a;">QList&lt;QTextEdit::ExtraSelection&gt; extras;</div><div class="m" style="left:152.00px;top:592.46px;font-size:10.20px;line-height:11.55px;letter-spacing:-0.710px;color:#0a800a;">+</div><div class="m" style="left:207.65px;top:592.46px;font-size:10.20px;line-height:11.55px;letter-spacing:-0.710px;color:#0a800a;">while(te-&gt;find(str)) {</div><div class="m" style="left:152.00px;top:604.96px;font-size:10.20px;line-height:11.55px;letter-spacing:-0.710px;color:#0a800a;">+</div><div class="m" style="left:263.30px;top:604.96px;font-size:10.20px;line-height:11.55px;letter-spacing:-0.710px;color:#0a800a;">QTextEdit::ExtraSelection extra;</div><div class="m" style="left:152.00px;top:617.46px;font-size:10.20px;line-height:11.55px;letter-spacing:-0.710px;color:#0a800a;">+</div><div class="m" style="left:263.30px;top:617.46px;font-size:10.20px;line-height:11.55px;letter-spacing:-0.710px;color:#0a800a;">extra.format.setBackground(Qt::yellow);</div><div class="m" style="left:152.00px;top:629.96px;font-size:10.20px;line-height:11.55px;letter-spacing:-0.710px;color:#0a800a;">+</div><div class="m" style="left:263.30px;top:629.96px;font-size:10.20px;line-height:11.55px;letter-spacing:-0.710px;color:#0a800a;">extra.cursor = te-&gt;textCursor();</div><div class="m" style="left:152.00px;top:642.46px;font-size:10.20px;line-height:11.55px;letter-spacing:-0.710px;color:#0a800a;">+</div><div class="m" style="left:263.30px;top:642.46px;font-size:10.20px;line-height:11.55px;letter-spacing:-0.710px;color:#0a800a;">extras.append(extra);</div></div>
</body></html>
